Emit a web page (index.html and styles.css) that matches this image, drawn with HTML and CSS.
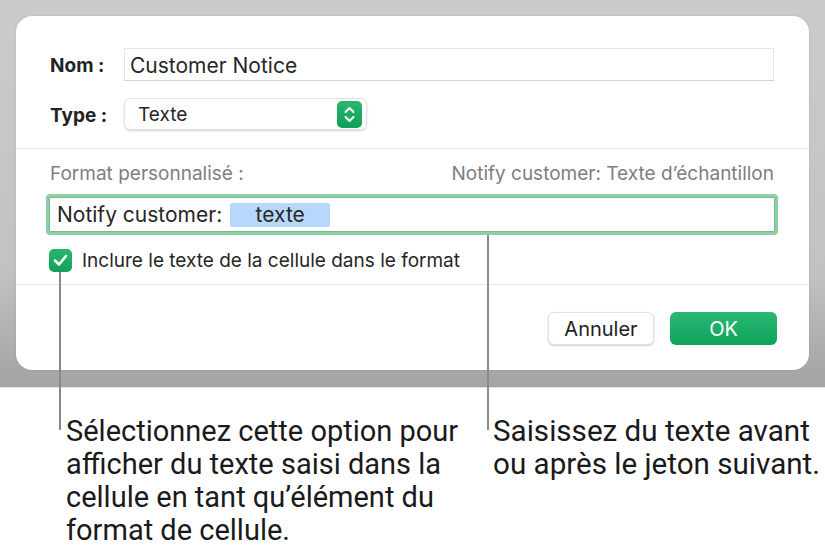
FILE: index.html
```html
<!DOCTYPE html>
<html lang="fr">
<head>
    <meta charset="UTF-8">
    <meta name="viewport" content="width=device-width, initial-scale=1.0">
    <title>Format personnalisé</title>
    <link rel="stylesheet" href="styles.css">
</head>
<body>

<div class="page">
    <div class="screen">
        <div class="dialog">
            <div class="section top">
                <div class="row">
                    <label class="label">Nom :</label>
                    <div class="name-field">Customer Notice</div>
                </div>
                <div class="row">
                    <label class="label">Type :</label>
                    <div class="select">
                        <span>Texte</span>
                        <span class="stepper">
                            <svg width="25" height="27" viewBox="0 0 25 27">
                                <path d="M8.5 11 L12.5 7 L16.5 11" fill="none" stroke="#fff" stroke-width="2" stroke-linecap="round" stroke-linejoin="round"/>
                                <path d="M8.5 16 L12.5 20 L16.5 16" fill="none" stroke="#fff" stroke-width="2" stroke-linecap="round" stroke-linejoin="round"/>
                            </svg>
                        </span>
                    </div>
                </div>
            </div>

            <div class="section middle">
                <div class="format-head">
                    <span>Format personnalisé :</span>
                    <span>Notify customer: Texte d’échantillon</span>
                </div>
                <div class="format-field">
                    <span>Notify customer:</span>
                    <span class="token">texte</span>
                </div>
                <div class="check-row">
                    <span class="checkbox">
                        <svg width="23" height="23" viewBox="0 0 23 23">
                            <path d="M6 11.5 L10 15.5 L17 7" fill="none" stroke="#fff" stroke-width="2.6" stroke-linecap="round" stroke-linejoin="round"/>
                        </svg>
                    </span>
                    <span>Inclure le texte de la cellule dans le format</span>
                </div>
            </div>

            <div class="section buttons">
                <button class="btn cancel">Annuler</button>
                <button class="btn ok">OK</button>
            </div>
        </div>
    </div>

    <div class="callouts">
        <p class="callout left">Sélectionnez cette option pour afficher du texte saisi dans la cellule en tant qu’élément du format de cellule.</p>
        <p class="callout right">Saisissez du texte avant ou après le jeton suivant.</p>
    </div>

    <span class="leader leader-check"></span>
    <span class="leader leader-field"></span>
</div>

</body>
</html>
```

FILE: styles.css
```css
* {
    box-sizing: border-box;
}

body {
    margin: 0;
    background: #ffffff;
    font-family: Inter, "Liberation Sans", sans-serif;
    color: #262626;
}

.page {
    position: relative;
    width: 825px;
    height: 556px;
    overflow: hidden;
}

.screen {
    height: 388px;
    padding-top: 16px;
    background: linear-gradient(to bottom, #cbcbcb 0%, #c2c2c2 70%, #a7a7a7 96%, #a4a4a4 100%);
    border-bottom: 1px solid #e2e2e2;
}

.dialog {
    margin: 0 16px;
    height: 354px;
    background: #ffffff;
    border-radius: 16px;
    box-shadow: 0 0 2px rgba(0, 0, 0, 0.15);
    display: flex;
    flex-direction: column;
}

.section {
    padding: 0 35px 0 34px;
}

.top {
    padding-top: 32px;
    padding-bottom: 18px;
    border-bottom: 1px solid #e6e6e6;
    display: flex;
    flex-direction: column;
    gap: 17px;
}

.row {
    display: flex;
    align-items: center;
}

.label {
    width: 74px;
    padding-top: 2px;
    font-weight: 700;
    font-size: 19px;
    color: #222;
}

.name-field {
    flex: 1;
    height: 33px;
    line-height: 33px;
    padding-left: 5px;
    border: 1px solid #e6e6e6;
    border-bottom-color: #d2d2d2;
    font-size: 21px;
    color: #262626;
}

.select {
    width: 243px;
    height: 32px;
    border: 1px solid #e2e2e2;
    border-radius: 6px;
    box-shadow: 0 1px 2px rgba(0, 0, 0, 0.18);
    display: flex;
    align-items: center;
    justify-content: space-between;
    padding: 0 4px 0 13px;
    font-size: 19px;
}

.stepper {
    display: flex;
    width: 25px;
    height: 27px;
    border-radius: 5px;
    background: linear-gradient(to bottom, #2cb56f, #0f9f57);
}

.middle {
    padding-top: 13px;
    padding-bottom: 12px;
    border-bottom: 1px solid #e6e6e6;
    display: flex;
    flex-direction: column;
}

.format-head {
    height: 22px;
    display: flex;
    justify-content: space-between;
    align-items: center;
    font-size: 19px;
    color: #7e7e7e;
}

.format-field {
    margin: 10px -4px 0 -4px;
    height: 41px;
    border: 3px solid #8dd0a6;
    border-radius: 4px;
    box-shadow: inset 0 0 0 1px #74bb8d;
    display: flex;
    align-items: center;
    padding-left: 8px;
    gap: 8px;
    font-size: 21px;
    color: #262626;
}

.token {
    width: 100px;
    height: 24px;
    line-height: 24px;
    text-align: center;
    background: #b9d6fb;
    border-radius: 2px;
}

.check-row {
    margin-top: 14px;
    height: 23px;
    display: flex;
    align-items: center;
    gap: 10px;
    font-size: 19px;
    color: #262626;
}

.checkbox {
    display: flex;
    width: 23px;
    height: 23px;
    border-radius: 5px;
    background: linear-gradient(to bottom, #2ab56d, #12a15a);
    margin-left: -1px;
}

.buttons {
    padding-top: 27px;
    padding-right: 32px;
    display: flex;
    justify-content: flex-end;
    gap: 16px;
}

.btn {
    height: 33px;
    border-radius: 6px;
    font-family: Inter, "Liberation Sans", sans-serif;
    font-size: 20px;
    padding: 0;
}

.cancel {
    width: 106px;
    background: #ffffff;
    border: 1px solid #e0e0e0;
    box-shadow: 0 1px 2px rgba(0, 0, 0, 0.2);
    color: #222;
}

.ok {
    width: 107px;
    border: none;
    background: linear-gradient(to bottom, #2bb874, #0ea45b);
    color: #ffffff;
}

.callouts {
    display: flex;
    padding-top: 27px;
    font-family: Roboto, "Liberation Sans", sans-serif;
    font-size: 29px;
    line-height: 33px;
    color: #1a1a1a;
}

.callout {
    margin: 0;
}

.left {
    margin-left: 66px;
    width: 405px;
}

.right {
    margin-left: 22px;
    width: 330px;
    font-size: 29.6px;
}

.leader {
    position: absolute;
    width: 2px;
    background: #8a8a8a;
}

.leader-check {
    left: 59px;
    top: 272px;
    height: 158px;
}

.leader-field {
    left: 487px;
    top: 235px;
    height: 195px;
}
```
